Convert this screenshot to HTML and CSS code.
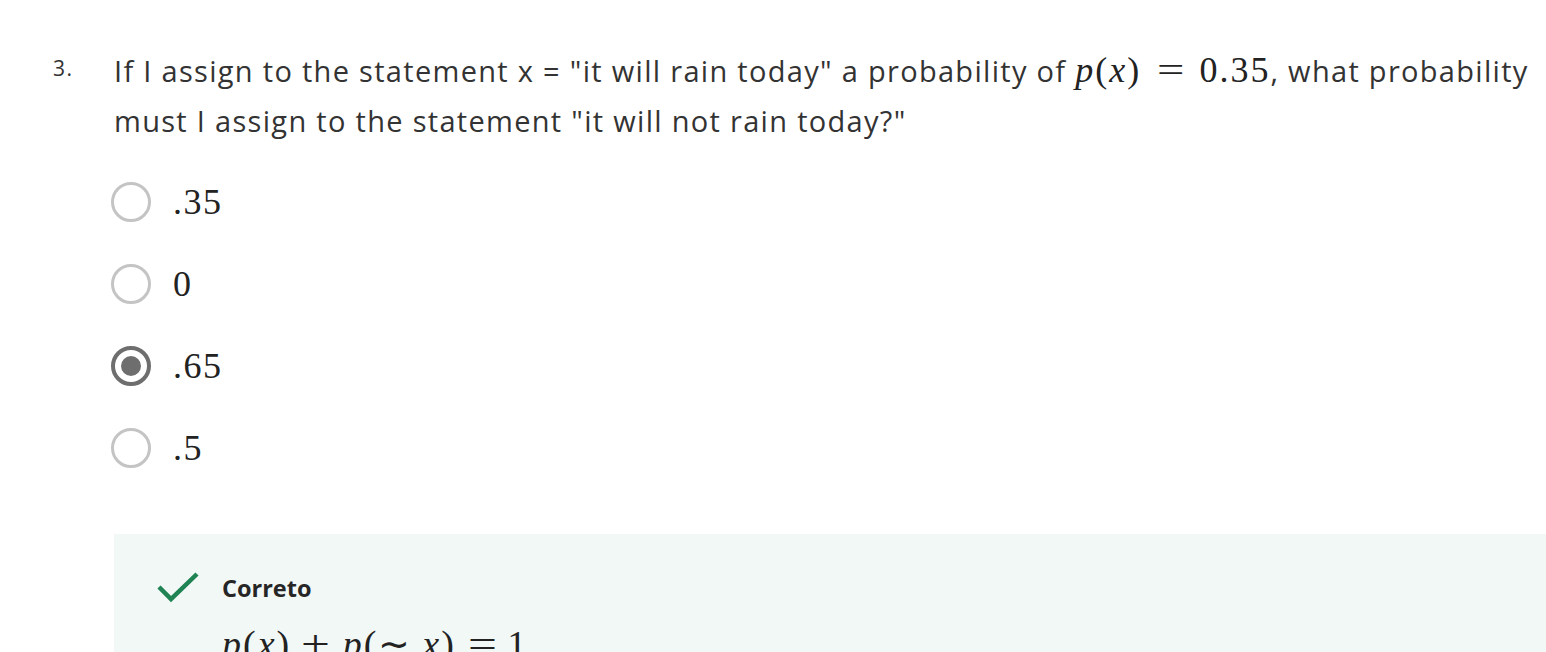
FILE: index.html
```html
<!DOCTYPE html>
<html>
<head>
<meta charset="utf-8">
<link rel="stylesheet" href="styles.css">
</head>
<body>
<div class="question">
  <div class="num">3.</div>
  <div class="body">
    <div class="prompt">If I assign to the statement x = "it will rain today" a probability of <span class="math"><i>p</i>(<i>x</i>)<span class="rel">=</span>0.35</span>, what probability must I assign to the statement "it will not rain today?"</div>
    <div class="options">
      <div class="option"><span class="radio"></span><span class="label">.35</span></div>
      <div class="option"><span class="radio"></span><span class="label">0</span></div>
      <div class="option"><span class="radio checked"></span><span class="label">.65</span></div>
      <div class="option"><span class="radio"></span><span class="label">.5</span></div>
    </div>
    <div class="feedback">
      <div class="fb-head">
        <svg class="check" width="46" height="34" viewBox="0 0 46 34"><path d="M3 16 L15 28 L41 3" fill="none" stroke="#1f8354" stroke-width="4.5"/></svg>
        <span class="fb-title">Correto</span>
      </div>
      <div class="fb-math"><i>p</i>(<i>x</i>)<span class="bin">+</span><i>p</i>(<span class="tilde">∼</span><i>x</i>)<span class="rel">=</span>1</div>
    </div>
  </div>
</div>
</body>
</html>
```
FILE: styles.css
```css
html, body {
  margin: 0;
  padding: 0;
  background: #fff;
  overflow: hidden;
}
body {
  font-family: "Open Sans", sans-serif;
  color: #333;
}
.question {
  display: flex;
  padding-top: 46px;
}
.num {
  box-sizing: border-box;
  padding-left: 53px;
  flex: 0 0 114px;
  font-size: 21px;
  letter-spacing: 1.5px;
  line-height: 44px;
}
.body {
  flex: 1;
}
.prompt {
  font-size: 29px;
  letter-spacing: 1.3px;
  line-height: 50px;
  padding-right: 10px;
}
.math {
  font-family: "Liberation Serif", serif;
  font-size: 36px;
  line-height: 1;
  letter-spacing: 2px;
  color: #222;
}
.math i, .fb-math i {
  font-style: italic;
}
.rel {
  display: inline-block;
  margin: 0 16px 0 20px;
  transform: scaleX(1.35);
}
.bin {
  display: inline-block;
  margin: 0 14px 0 14px;
  transform: scaleX(1.35);
}
.options {
  display: flex;
  flex-direction: column;
  margin-top: 15px;
}
.option {
  display: flex;
  align-items: center;
  height: 82px;
}
.radio {
  width: 40px;
  height: 40px;
  box-sizing: border-box;
  border: 3px solid #c4c4c4;
  border-radius: 50%;
  margin-left: -3px;
  display: flex;
  align-items: center;
  justify-content: center;
}
.radio.checked {
  border: 4px solid #6e6e6e;
}
.radio.checked::after {
  content: "";
  width: 20px;
  height: 20px;
  border-radius: 50%;
  background: #6e6e6e;
}
.label {
  font-family: "Liberation Serif", serif;
  font-size: 36px;
  letter-spacing: 1.5px;
  margin-left: 22px;
  color: #222;
}
.feedback {
  margin-top: 45px;
  background: #f2f8f6;
  padding: 37px 0 0 42px;
  height: 200px;
}
.fb-head {
  display: flex;
  align-items: center;
}
.check {
  display: block;
}
.fb-title {
  font-weight: 700;
  font-size: 23.5px;
  margin-left: 20px;
  color: #262626;
}
.fb-math {
  font-family: "Liberation Serif", serif;
  font-size: 38px;
  letter-spacing: 2px;
  margin-left: 66px;
  margin-top: 17px;
  color: #222;
}
.fb-math .rel {
  margin: 0 12px 0 16px;
}
.tilde {
  display: inline-block;
  margin-right: 10px;
}
```
